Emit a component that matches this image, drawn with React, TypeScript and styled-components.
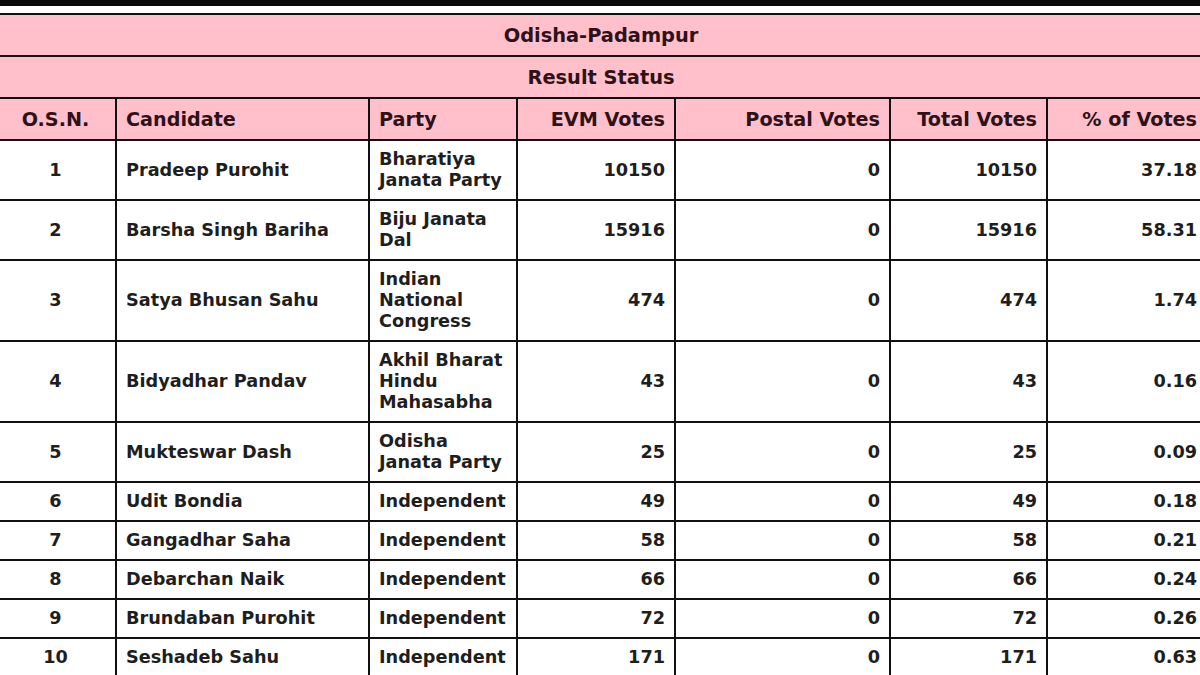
import styled, { createGlobalStyle } from 'styled-components';

const GlobalStyle = createGlobalStyle`
  html, body {
    margin: 0;
    padding: 0;
    background: #fff;
    overflow: hidden;
  }
  body {
    font-family: 'DejaVu Sans', Verdana, sans-serif;
  }
`;

const Page = styled.div`
  width: 1200px;
  height: 675px;
  overflow: hidden;
  background: #fff;
`;

const TopBar = styled.div`
  height: 6px;
  background: #0a0a0a;
  margin-bottom: 7px;
`;

const Table = styled.table`
  border-collapse: collapse;
  table-layout: fixed;
  width: 1212px;
  margin-left: -6px;
  border-top: 2px solid #2a2a2a;
  font-size: 17.7px;
  font-weight: bold;
  line-height: 21px;
  color: #1e1e1e;
`;

const BannerCell = styled.th`
  background: #ffc0cb;
  color: #2e1218;
  border: 2px solid #111;
  height: 40px;
  padding: 0;
  text-align: center;
  font-size: 19.4px;
  font-weight: bold;
`;

const HeadCell = styled.th<{ $align: string }>`
  background: #ffc0cb;
  color: #2e1218;
  border: 2px solid #111;
  height: 40px;
  padding: 0 9px;
  text-align: ${(p) => p.$align};
  font-size: 19.2px;
  font-weight: bold;
  white-space: nowrap;
`;

const Cell = styled.td<{ $align: string }>`
  background: #fff;
  border: 2px solid #111;
  padding: 8px 9px;
  text-align: ${(p) => p.$align};
  vertical-align: middle;
`;

type Col = { label: string; width: number; align: string };

const columns: Col[] = [
  { label: 'O.S.N.', width: 121, align: 'center' },
  { label: 'Candidate', width: 253, align: 'left' },
  { label: 'Party', width: 148, align: 'left' },
  { label: 'EVM Votes', width: 158, align: 'right' },
  { label: 'Postal Votes', width: 215, align: 'right' },
  { label: 'Total Votes', width: 157, align: 'right' },
  { label: '% of Votes', width: 160, align: 'right' },
];

const rows: [string, string, string, string, string, string, string][] = [
  ['1', 'Pradeep Purohit', 'Bharatiya Janata Party', '10150', '0', '10150', '37.18'],
  ['2', 'Barsha Singh Bariha', 'Biju Janata Dal', '15916', '0', '15916', '58.31'],
  ['3', 'Satya Bhusan Sahu', 'Indian National Congress', '474', '0', '474', '1.74'],
  ['4', 'Bidyadhar Pandav', 'Akhil Bharat Hindu Mahasabha', '43', '0', '43', '0.16'],
  ['5', 'Mukteswar Dash', 'Odisha Janata Party', '25', '0', '25', '0.09'],
  ['6', 'Udit Bondia', 'Independent', '49', '0', '49', '0.18'],
  ['7', 'Gangadhar Saha', 'Independent', '58', '0', '58', '0.21'],
  ['8', 'Debarchan Naik', 'Independent', '66', '0', '66', '0.24'],
  ['9', 'Brundaban Purohit', 'Independent', '72', '0', '72', '0.26'],
  ['10', 'Seshadeb Sahu', 'Independent', '171', '0', '171', '0.63'],
];

const App = () => (
  <Page>
    <GlobalStyle />
    <TopBar />
    <Table>
      <colgroup>
        {columns.map((c) => (
          <col key={c.label} style={{ width: c.width }} />
        ))}
      </colgroup>
      <thead>
        <tr>
          <BannerCell colSpan={7}>Odisha-Padampur</BannerCell>
        </tr>
        <tr>
          <BannerCell colSpan={7}>Result Status</BannerCell>
        </tr>
        <tr>
          {columns.map((c) => (
            <HeadCell key={c.label} $align={c.align}>
              {c.label}
            </HeadCell>
          ))}
        </tr>
      </thead>
      <tbody>
        {rows.map((r) => (
          <tr key={r[0]}>
            {r.map((v, i) => (
              <Cell key={i} $align={columns[i].align}>
                {v}
              </Cell>
            ))}
          </tr>
        ))}
      </tbody>
    </Table>
  </Page>
);

export default App;
